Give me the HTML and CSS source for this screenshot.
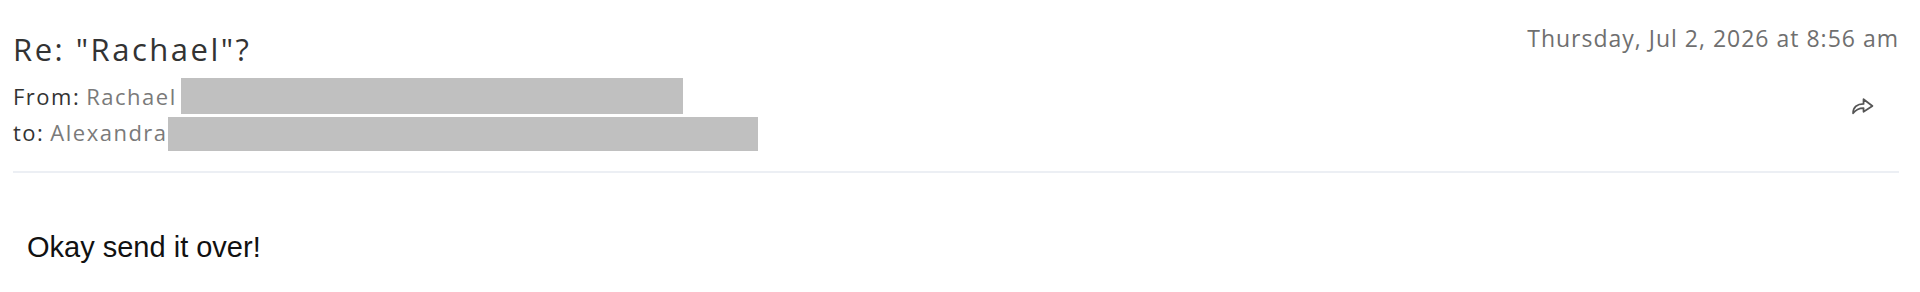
FILE: index.html
```html
<!DOCTYPE html>
<html lang="en">
<head>
    <meta charset="UTF-8">
    <meta name="viewport" content="width=device-width, initial-scale=1.0">
    <title>Re: "Rachael"?</title>
    <link rel="stylesheet" href="styles.css">
</head>
<body>
    <div class="message">
        <div class="header">
            <div class="meta">
                <h1 class="subject">Re: "Rachael"?</h1>
                <div class="row row-from">
                    <span class="label">From:</span>
                    <span class="name">Rachael</span>
                    <span class="redacted redacted-from"></span>
                </div>
                <div class="row row-to">
                    <span class="label">to:</span>
                    <span class="name">Alexandra</span>
                    <span class="redacted redacted-to"></span>
                </div>
            </div>
            <div class="side">
                <div class="date">Thursday, Jul 2, 2026 at 8:56 am</div>
                <button class="forward" title="Forward">
                    <svg width="23" height="20" viewBox="0 0 22 19" fill="none" stroke="#555" stroke-width="1.7" stroke-linejoin="round" stroke-linecap="round">
                        <path d="M2 16.5 C2 10.5 6 7.5 12 7.5 V3 L20.5 9.5 L12 15 V11.5 C7.5 11.5 4.5 13 2 16.5 Z"/>
                    </svg>
                </button>
            </div>
        </div>

        <div class="body">
            Okay send it over!
        </div>
    </div>
</body>
</html>
```

FILE: styles.css
```css
* {
    box-sizing: border-box;
    margin: 0;
    padding: 0;
}

body {
    background-color: #fff;
    font-family: 'Open Sans', 'Lato', sans-serif;
    color: #333;
}

.message {
    padding: 23px 21px 0 13px;
}

.header {
    display: flex;
    justify-content: space-between;
    border-bottom: 2px solid #eceff4;
    padding-bottom: 19px;
}

.subject {
    font-size: 31px;
    font-weight: 400;
    color: #333;
    line-height: 40px;
    letter-spacing: 2.5px;
    margin-top: 6px;
    margin-bottom: 9px;
}

.row {
    display: flex;
    align-items: flex-start;
    font-size: 22px;
    line-height: 36px;
    letter-spacing: 1.5px;
}

.row-from {
    height: 36px;
}

.row-to {
    height: 38px;
}

.label {
    color: #333;
    margin-right: 6px;
}

.name {
    color: #7a7a7a;
}

.row-from .name {
    margin-right: 4px;
}

.redacted {
    display: inline-block;
    background-color: #c0c0c0;
    height: 36px;
}

.redacted-from {
    width: 502px;
}

.redacted-to {
    width: 590px;
    height: 34px;
    margin-top: 3px;
}

.side {
    display: flex;
    flex-direction: column;
    align-items: flex-end;
}

.date {
    font-size: 23px;
    color: #6f6f6f;
    line-height: 30px;
    letter-spacing: 1px;
}

.forward {
    background: none;
    border: none;
    margin-top: 43px;
    margin-right: 25px;
    width: 23px;
    height: 20px;
    cursor: pointer;
}

.body {
    font-family: 'Liberation Sans', Arial, sans-serif;
    font-size: 29px;
    color: #111;
    padding: 58px 14px 20px;
}
```
